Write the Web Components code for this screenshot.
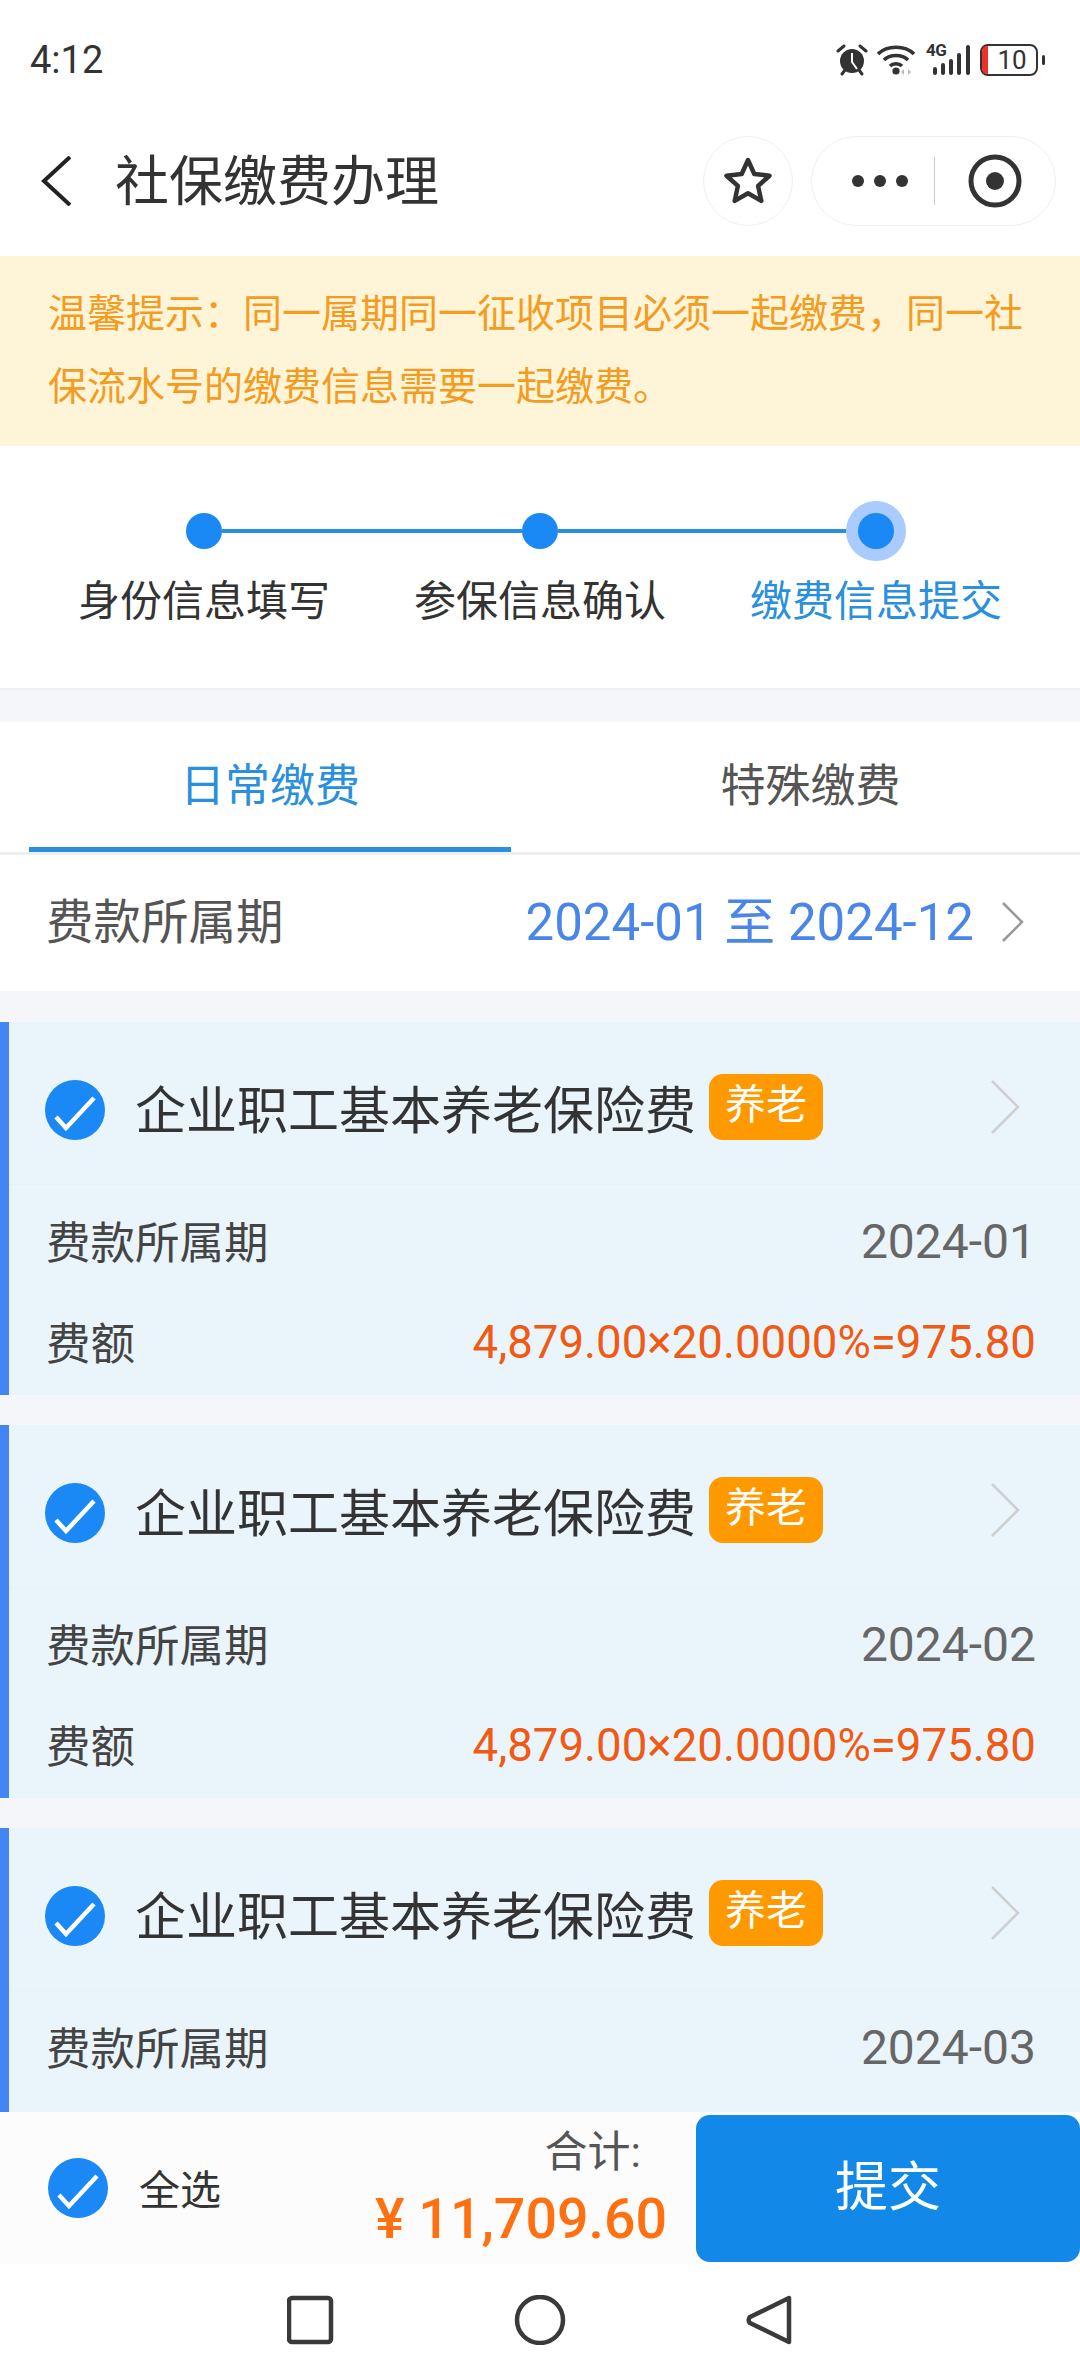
<!DOCTYPE html>
<html lang="zh">
<head>
<meta charset="utf-8">
<title>社保缴费办理</title>
<style>
html, body { margin: 0; padding: 0; }
body { width: 1080px; height: 2376px; overflow: hidden; background: #f4f6f9; font-family: Roboto, "Noto Sans CJK SC", sans-serif; color: #333; }
</style>
</head>
<body>
<app-page>
  <status-bar></status-bar>
  <nav-header>社保缴费办理</nav-header>
  <notice-bar>温馨提示&#xFF1A;同一属期同一征收项目必须一起缴费&#xFF0C;同一社保流水号的缴费信息需要一起缴费。</notice-bar>
  <step-bar></step-bar>
  <tab-bar></tab-bar>
  <period-row></period-row>
  <fee-list>
    <fee-card month="2024-01" fee="4,879.00×20.0000%=975.80"></fee-card>
    <fee-card month="2024-02" fee="4,879.00×20.0000%=975.80"></fee-card>
    <fee-card month="2024-03"></fee-card>
  </fee-list>
  <total-bar></total-bar>
  <system-nav></system-nav>
</app-page>
<script>
((global) => {
  'use strict';

  const CHECK = `<svg class="check" width="60" height="60" viewBox="0 0 60 60"><circle cx="30" cy="30" r="30" fill="#1a88f5"/><path d="M11 37l10 11 28-30" fill="none" stroke="#fff" stroke-width="4.5"/></svg>`;

  // small helper, every element is only a template + open shadow root
  const define = (name, html) => {
    customElements.define(name, class extends HTMLElement {
      constructor() {
        super();
        this.attachShadow({ mode: 'open' }).innerHTML = typeof html === 'function' ? html(this) : html;
      }
    });
  };

  define('app-page', `
<style>
:host { display: flex; flex-direction: column; height: 2376px; }
</style>
<slot></slot>`);

  define('status-bar', `
<style>
:host { display: flex; align-items: center; justify-content: space-between; height: 100px; padding: 20px 35px 0 30px; box-sizing: border-box; background: #fff; }
.time { font-size: 38px; color: #333; }
.icons { display: flex; align-items: center; }
svg { display: block; }
.signal { position: relative; width: 45px; height: 32px; margin-right: 9px; }
.net { position: absolute; left: 0; top: -4px; font-size: 17px; line-height: 20px; font-weight: 700; letter-spacing: -0.5px; color: #333; }
.batt { display: flex; align-items: center; justify-content: center; position: relative; width: 58px; height: 32px; box-sizing: border-box; border: 2.5px solid #333; border-radius: 8px; font-size: 26px; line-height: 27px; color: #333; padding-left: 6px; }
.batt::before { content: ""; position: absolute; left: 0; top: 0; bottom: 0; width: 6px; border-radius: 5px 0 0 5px; background: #ee3124; }
.tip { width: 3px; height: 10px; border-radius: 2px; background: #333; margin-left: 4px; }
</style>
<span class="time">4:12</span>
<div class="icons">
  <svg width="32" height="32" viewBox="0 0 32 32" style="margin-right:9px"><circle cx="16" cy="17" r="12" fill="#333"/><path d="M16 9v9l5 7" fill="none" stroke="#fff" stroke-width="2"/><path d="M2 7l6-5M30 7l-6-5M6 30l3-4M26 30l-3-4" stroke="#333" stroke-width="3" stroke-linecap="round"/></svg>
  <svg width="40" height="32" viewBox="0 0 40 32" style="margin-right:9px"><path d="M1 10C10 1 28 1 37 10M7 16C13 10 25 10 31 16M13 22c3-3 9-3 12 0" fill="none" stroke="#333" stroke-width="3.6"/><circle cx="19" cy="27" r="3.6" fill="#333"/><path d="M27 25v6l-3-3zM31 25v6l3-3z" fill="#bbb"/></svg>
  <div class="signal"><span class="net">4G</span><svg width="45" height="32" viewBox="0 0 45 32"><rect x="7" y="23" width="4" height="8" rx="2" fill="#333"/><rect x="15" y="19" width="4" height="12" rx="2" fill="#333"/><rect x="23" y="15" width="4" height="16" rx="2" fill="#333"/><rect x="31" y="9" width="4" height="22" rx="2" fill="#333"/><rect x="40" y="1" width="4" height="30" rx="2" fill="#333"/></svg></div>
  <div class="batt">10</div><div class="tip"></div>
</div>`);

  define('nav-header', `
<style>
:host { display: flex; align-items: center; height: 156px; padding: 6px 24px 0 41px; box-sizing: border-box; background: #fff; }
.title { flex: 1; margin-left: 44px; padding-bottom: 8px; font-size: 54px; color: #333; }
.star, .capsule { box-sizing: border-box; height: 90px; border: 1.5px solid #efefef; border-radius: 45px; display: flex; align-items: center; justify-content: center; }
.star { width: 90px; margin-right: 18px; }
.capsule { width: 245px; }
.dots { width: 122px; display: flex; justify-content: flex-end; gap: 10px; padding-right: 26px; box-sizing: border-box; }
.dots i { width: 12px; height: 12px; border-radius: 50%; background: #333; }
.sep { width: 1px; height: 48px; background: #ccc; }
.target { flex: 1; display: flex; justify-content: center; }
svg { display: block; }
</style>
<svg width="30" height="50" viewBox="0 0 30 50"><path d="M29 1L3 25l26 24" fill="none" stroke="#222" stroke-width="4"/></svg>
<span class="title"><slot></slot></span>
<div class="star"><svg width="50" height="50" viewBox="0 0 50 50"><path d="M25 4l6.3 14 15.2 1.700-11.400 10.200 3.200 15-13.300-7.700-13.300 7.700 3.200-15L3.500 19.700 18.700 18z" fill="none" stroke="#333" stroke-width="4.500" stroke-linejoin="round"/></svg></div>
<div class="capsule">
  <div class="dots"><i></i><i></i><i></i></div>
  <div class="sep"></div>
  <div class="target"><svg width="54" height="54" viewBox="0 0 54 54"><circle cx="27" cy="27" r="24" fill="none" stroke="#333" stroke-width="5"/><circle cx="27" cy="27" r="9" fill="#333"/></svg></div>
</div>`);

  define('notice-bar', `
<style>
:host { display: block; height: 190px; padding: 22px 40px 0 48px; box-sizing: border-box; background: #fef4d8; color: #f39c1f; font-size: 39px; line-height: 73px; }
</style>
<slot></slot>`);

  define('step-bar', `
<style>
:host { display: block; height: 244px; padding-top: 67px; box-sizing: border-box; background: #fff; border-bottom: 2px solid #eef0f3; margin-bottom: 32px; }
.track { display: flex; align-items: center; padding: 0 186px; }
.dot { width: 36px; height: 36px; border-radius: 50%; background: #1a88f5; flex: none; }
.dot.now { box-shadow: 0 0 0 12px #a9cbfd; }
.line { flex: 1; height: 4px; background: #2a8fe0; }
.labels { display: grid; grid-template-columns: repeat(3, 336px); padding: 0 36px; margin-top: 23px; font-size: 42px; line-height: 60px; text-align: center; color: #333; }
.labels .now { color: #2a8fdc; }
</style>
<div class="track"><div class="dot"></div><div class="line"></div><div class="dot"></div><div class="line"></div><div class="dot now"></div></div>
<div class="labels"><span>身份信息填写</span><span>参保信息确认</span><span class="now">缴费信息提交</span></div>`);

  define('tab-bar', `
<style>
:host { display: flex; height: 133px; box-sizing: border-box; background: #fff; border-bottom: 3px solid #eeeff1; font-size: 45px; color: #555; }
.tab { box-sizing: border-box; text-align: center; line-height: 130px; height: 130px; }
.on { width: 482px; margin-left: 29px; color: #2a8fdc; border-bottom: 5px solid #2a8fdc; }
.off { flex: 1; padding-left: 30px; }
</style>
<div class="tab on">日常缴费</div><div class="tab off">特殊缴费</div>`);

  define('period-row', `
<style>
:host { display: flex; align-items: center; height: 136px; padding: 0 56px 10px 46px; box-sizing: border-box; background: #fff; font-size: 47.500px; color: #555; }
.label { flex: 1; }
.value { color: #4a86e8; margin-right: 28px; font-size: 51px; }
svg { display: block; margin-top: 8px; }
</style>
<span class="label">费款所属期</span><span class="value">2024-01 至 2024-12</span>
<svg width="22" height="40" viewBox="0 0 22 40"><path d="M1 1l19 19L1 39" fill="none" stroke="#999" stroke-width="2.500"/></svg>`);

  define('fee-list', `
<style>
:host { display: flex; flex-direction: column; gap: 30px; flex: 1; min-height: 0; overflow: hidden; padding-top: 31px; }
</style>
<slot></slot>`);

  define('fee-card', (el) => `
<style>
:host { display: block; flex: none; height: 373px; box-sizing: border-box; background: #e9f4fb; border-left: 9px solid #4285f4; }
:host(:last-child) { flex: 1; height: auto; }
.head { display: flex; align-items: center; height: 163px; padding: 7px 60px 0 36px; box-sizing: border-box; border-bottom: 1px solid #e6f2fa; }
svg { display: block; flex: none; }
.check { margin-top: 6px; }
.title { margin-left: 30px; font-size: 51px; color: #333; white-space: nowrap; }
.tag { margin-left: 13px; width: 114px; height: 66px; border-radius: 14px; background: #ff9900; color: #fff; font-size: 41px; line-height: 62px; text-align: center; }
.gap { flex: 1; }
.row { display: flex; justify-content: space-between; align-items: center; height: 101px; padding: 0 44px 0 37px; font-size: 44.500px; color: #444; }
.row span { padding-bottom: 4px; }
.row b { font-weight: 400; color: #666; font-size: 48px; }
.row b.fee { color: #f05a14; font-size: 45.600px; }
.rows { padding-top: 6px; }
</style>
<div class="head">
  ${CHECK}
  <span class="title">企业职工基本养老保险费</span>
  <span class="tag">养老</span>
  <span class="gap"></span>
  <svg width="30" height="54" viewBox="0 0 30 54"><path d="M2 1l26 26L2 53" fill="none" stroke="#cfcfcf" stroke-width="2.500"/></svg>
</div>
<div class="rows">
  <div class="row"><span>费款所属期</span><b>${el.getAttribute('month')}</b></div>
  ${el.hasAttribute('fee') ? `<div class="row"><span>费额</span><b class="fee">${el.getAttribute('fee')}</b></div>` : ''}
</div>`);

  define('total-bar', `
<style>
:host { display: flex; align-items: center; flex: none; height: 152px; background: #fcfcfc; padding-left: 48px; box-sizing: border-box; }
svg { display: block; }
.all { margin-left: 31px; padding-bottom: 3px; font-size: 41px; color: #333; flex: 1; }
.sum { display: flex; flex-direction: column; align-items: flex-end; margin-right: 29px; padding-top: 4px; }
.lbl { font-size: 43px; line-height: 60px; color: #555; margin-right: 26px; }
.amt { font-size: 55.500px; line-height: 76px; color: #ff7010; font-weight: 500; }
.btn { width: 384px; height: 147px; align-self: flex-start; margin-top: 3px; background: #1289e8; border-radius: 14px; color: #fff; font-size: 53px; line-height: 146px; text-align: center; }
</style>
${CHECK}
<span class="all">全选</span>
<div class="sum"><span class="lbl">合计:</span><span class="amt">¥ 11,709.60</span></div>
<div class="btn">提交</div>`);

  define('system-nav', `
<style>
:host { display: flex; justify-content: center; align-items: center; flex: none; height: 112px; background: #fff; box-sizing: border-box; }
svg { display: block; }
</style>
<svg width="506" height="50" viewBox="287 0 506 50"><rect x="289" y="3" width="42" height="44" rx="3" fill="none" stroke="#3a3a3a" stroke-width="4.500"/><circle cx="540" cy="25" r="23" fill="none" stroke="#3a3a3a" stroke-width="4.500"/><path d="M789 3v44L750 28a4 4 0 010-6z" fill="none" stroke="#3a3a3a" stroke-width="4.500" stroke-linejoin="round"/></svg>`);
})(this);
</script>
</body>
</html>
